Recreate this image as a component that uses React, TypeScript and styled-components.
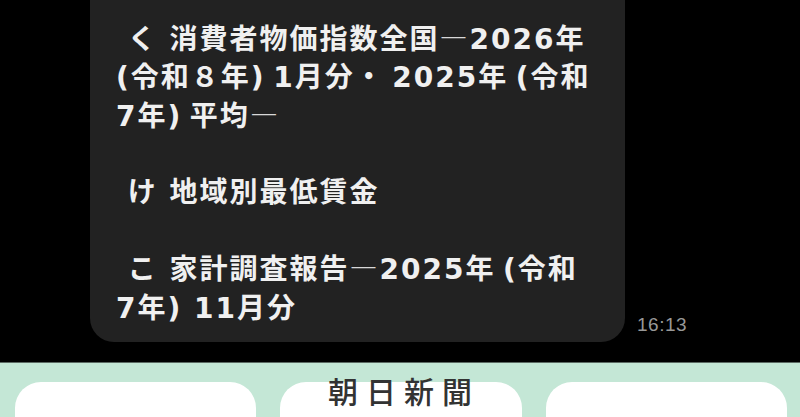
import React from "react";
import styled, { createGlobalStyle } from "styled-components";

const GlobalStyle = createGlobalStyle`
  html, body {
    margin: 0;
    padding: 0;
    background: #000;
    overflow: hidden;
  }
  body {
    font-family: "Noto Sans CJK JP", "Noto Sans", sans-serif;
  }
`;

// 画面全体
const Page = styled.div`
  width: 800px;
  height: 417px;
  display: flex;
  flex-direction: column;
  background: #000;
`;

// トーク部分
const ChatArea = styled.div`
  height: 362px;
  display: flex;
  align-items: flex-end;
  padding: 0 0 20px 90px;
  box-sizing: border-box;
  overflow: hidden;
`;

const Bubble = styled.div`
  width: 535px;
  flex-shrink: 0;
  box-sizing: border-box;
  padding: 60px 10px 14px 26px;
  background: #222222;
  border-radius: 24px;
`;

// 数字と英字は幅の広い DejaVu、漢字かなは Noto
const Line = styled.div`
  height: 38.4px;
  line-height: 38.4px;
  color: #f0f0f0;
  font-family: "DejaVu Sans", "Noto Sans CJK JP", sans-serif;
  font-size: 28px;
  font-weight: 700;
  letter-spacing: 2px;
  white-space: pre;
`;

// ダッシュは細く
const Dash = styled.span`
  font-family: "Noto Sans CJK JP", sans-serif;
  font-weight: 400;
  line-height: 0;
  color: #d8d8d8;
`;

const Time = styled.span`
  margin: 0 0 8px 12px;
  font-family: "Liberation Sans", Arial, sans-serif;
  font-size: 19px;
  line-height: 18px;
  letter-spacing: 0.5px;
  color: #989898;
`;

// 下のメニュー部分
const MenuBar = styled.div`
  position: relative;
  flex: 1;
  overflow: hidden;
  background: #c4e7d6;
  border-top: 1px solid #5c6a63;
`;

const MenuTitle = styled.div`
  position: absolute;
  top: 11px;
  left: 0;
  right: 0;
  padding-left: 8px;
  text-align: center;
  font-size: 30px;
  line-height: 32px;
  font-weight: 500;
  letter-spacing: 8px;
  color: #333;
`;

const CardRow = styled.div`
  display: grid;
  grid-template-columns: repeat(3, 1fr);
  gap: 24px;
  padding: 19px 13px 0 15px;
`;

const Card = styled.div`
  height: 70px;
  background: #fff;
  border-radius: 26px;
`;

const lines: string[] = [
  " く 消費者物価指数全国―2026年",
  "(令和８年)\u20091月分・\u20092025年\u2009(令和",
  "7年)\u2009平均―",
  "",
  " け 地域別最低賃金",
  "",
  " こ 家計調査報告―2025年\u2009(令和",
  "7年) 11月分",
];

const renderLine = (text: string) =>
  text.split("―").map((part, i) => (
    <React.Fragment key={i}>
      {i > 0 && <Dash>―</Dash>}
      {part}
    </React.Fragment>
  ));

const App = () => {
  return (
    <>
      <GlobalStyle />
      <Page>
        <ChatArea>
          <Bubble>
            {lines.map((text, i) => (
              <Line key={i}>{renderLine(text)}</Line>
            ))}
          </Bubble>
          <Time>16:13</Time>
        </ChatArea>
        <MenuBar>
          <CardRow>
            <Card />
            <Card />
            <Card />
          </CardRow>
          <MenuTitle>朝日新聞</MenuTitle>
        </MenuBar>
      </Page>
    </>
  );
};

export default App;
